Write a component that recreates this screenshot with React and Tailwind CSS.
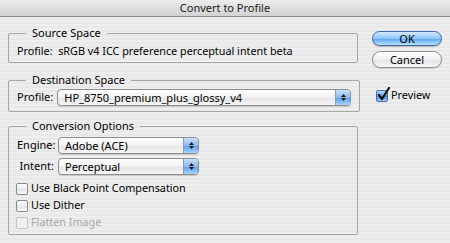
const FONT = "font-['Noto_Sans','DejaVu_Sans',sans-serif]";

function Popup({ value, width }) {
  return (
    <div
      className={`flex h-[17px] items-stretch rounded-[4px] border border-[#8e8e8e] bg-[linear-gradient(#ffffff,#f1f1f1_50%,#e4e4e4_51%,#f6f6f6)] shadow-[0_1px_1px_rgba(0,0,0,0.15)] ${width}`}
    >
      <span className="flex-1 truncate pl-[6px] text-[11px] leading-[15px] text-black">{value}</span>
      <span className="flex w-[15px] flex-col items-center justify-center gap-[1px] rounded-r-[3px] border-l border-[#7d9bc4] bg-[linear-gradient(#c9e0fb,#8cbaf2_50%,#5c9ceb_51%,#a8d3ff)]">
        <svg width="5" height="3" viewBox="0 0 5 3"><path d="M0 3 L2.5 0 L5 3 Z" fill="#1a1a1a" /></svg>
        <svg width="5" height="3" viewBox="0 0 5 3"><path d="M0 0 L2.5 3 L5 0 Z" fill="#1a1a1a" /></svg>
      </span>
    </div>
  );
}

function Check({ label, checked, disabled }) {
  return (
    <div className="flex h-[17px] items-center gap-[3px]">
      {checked ? (
        <span className="relative h-[12px] w-[12px] rounded-[2px] border border-[#4a6da0] bg-[linear-gradient(#b8d6fb,#6aa6ee_50%,#3e86e0_51%,#9fcdff)]">
          <svg className="absolute left-[0px] top-[-4px]" width="14" height="14" viewBox="0 0 14 14">
            <path d="M2 8 L5 12 L12 1" fill="none" stroke="#111" strokeWidth="2.2" strokeLinecap="round" strokeLinejoin="round" />
          </svg>
        </span>
      ) : (
        <span
          className={`h-[12px] w-[12px] rounded-[2px] border ${disabled ? "border-[#c4c4c4] bg-[#f0f0f0]" : "border-[#8a8a8a] bg-[linear-gradient(#fdfdfd,#eeeeee_50%,#e2e2e2_51%,#fafafa)]"}`}
        />
      )}
      <span className={`text-[10.8px] ${disabled ? "text-[#a8a8a8]" : "text-black"}`}>{label}</span>
    </div>
  );
}

function Group({ title, className, children }) {
  return (
    <fieldset className={`rounded-[2px] border border-[#a6a6a6] px-[8px] ${className}`}>
      <legend className="ml-[9px] px-[6px] text-[11px] leading-[14px] text-black">{title}</legend>
      {children}
    </fieldset>
  );
}

export default function App() {
  return (
    <div
      className={`h-[243px] w-[450px] overflow-hidden bg-[repeating-linear-gradient(#eeeeee_0px,#eeeeee_2px,#e8e8e8_2px,#e8e8e8_4px)] ${FONT}`}
    >
      <div className="flex h-[17px] items-center justify-center border-b border-[#8b8b8b] bg-[linear-gradient(#ececec,#d2d2d2)] text-[11px] text-[#1a1a1a]">
        Convert to Profile
      </div>

      <div className="flex pl-[8px] pt-[9px]">
        <div className="flex w-[350px] flex-col">
          <Group title="Source Space" className="h-[37px]">
            <div className="mt-[4px] text-[10.8px] leading-[14px] text-black">
              Profile:&nbsp; sRGB v4 ICC preference perceptual intent beta
            </div>
          </Group>

          <Group title="Destination Space" className="mt-[10px] h-[39px]">
            <div className="mt-[2px] flex items-center gap-[4px]">
              <span className="text-[11px] text-black">Profile:</span>
              <Popup value="HP_8750_premium_plus_glossy_v4" width="w-[294px]" />
            </div>
          </Group>

          <Group title="Conversion Options" className="mt-[7px] h-[116px]">
            <div className="mt-[4px] flex flex-col gap-[4px]">
              <div className="flex items-center gap-[4px]">
                <span className="w-[37px] text-right text-[11px] text-black">Engine:</span>
                <Popup value="Adobe (ACE)" width="w-[141px]" />
              </div>
              <div className="flex items-center gap-[4px]">
                <span className="w-[37px] text-right text-[11px] text-black">Intent:</span>
                <Popup value="Perceptual" width="w-[141px]" />
              </div>
            </div>
            <div className="-ml-[1px] mt-[5px] flex flex-col">
              <Check label="Use Black Point Compensation" />
              <Check label="Use Dither" />
              <Check label="Flatten Image" disabled />
            </div>
          </Group>
        </div>

        <div className="ml-[14px] flex flex-col pt-[5px]">
          <button className="flex h-[15px] w-[70px] items-center justify-center rounded-full border border-[#3d66a8] bg-[linear-gradient(#d4e9ff,#8ec3f7_50%,#5aa4f0_51%,#b7e3ff)] text-[11px] leading-none text-black shadow-[0_1px_1px_rgba(0,0,0,0.2)]">
            OK
          </button>
          <button className="mt-[5px] flex h-[17px] w-[70px] items-center justify-center rounded-full border border-[#8c8c8c] bg-[linear-gradient(#ffffff,#f0f0f0_50%,#e2e2e2_51%,#f8f8f8)] text-[11px] leading-none text-black shadow-[0_1px_1px_rgba(0,0,0,0.15)]">
            Cancel
          </button>
          <div className="ml-[4px] mt-[19px]">
            <Check label="Preview" checked />
          </div>
        </div>
      </div>
    </div>
  );
}
